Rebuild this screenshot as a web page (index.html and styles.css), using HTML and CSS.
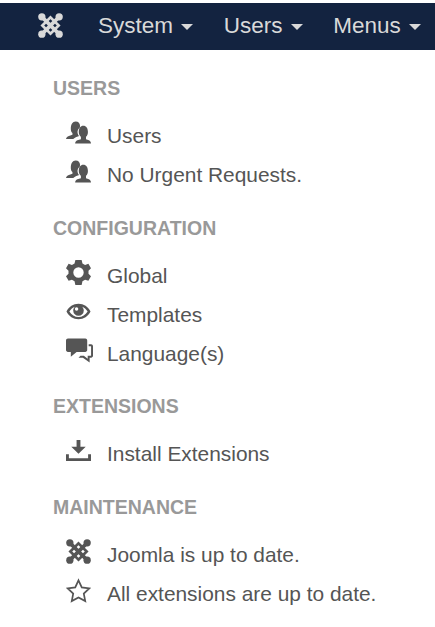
FILE: index.html
```html
<!DOCTYPE html>
<html lang="en">

<head>
    <meta charset="UTF-8">
    <meta name="viewport" content="width=device-width, initial-scale=1.0">
    <title>Control Panel</title>
    <link rel="stylesheet" href="styles.css">
</head>

<body>
    <svg class="defs" width="0" height="0">
        <symbol id="i-joomla" viewBox="0 0 26 26">
            <path class="j-arm" d="M4 4 L22 22 M22 4 L4 22" />
            <path class="j-ring" d="M13 4.500 L21.500 13 L13 21.500 L4.500 13 Z" />
            <circle cx="4" cy="4" r="3.800" /><circle cx="22" cy="4" r="3.800" />
            <circle cx="4" cy="22" r="3.800" /><circle cx="22" cy="22" r="3.800" />
        </symbol>
        <symbol id="i-users" viewBox="0 0 26 23">
            <path d="M10 0c3 0 4.600 2 4.600 4.500 0 .8-.1 1.500-.4 2.200-1.600 1-2.400 2.900-2.200 4.800.1 1.500.8 2.900 1.700 3.700-1.500.5-4.500 1.500-6.200 3H0c.3-1.400 1.200-2.400 3-3l3.700-1.400v-1.700C5.400 11 5 9.500 5 7.500 5 3 6.800 0 10 0z" />
            <path d="M18 4.500c3 0 4.800 2.600 4.800 6.500 0 2.300-.7 4-2 5v2.500l3 1c1.300.5 2 1.500 2.200 3.500H9.500c.2-2 1-3 2.300-3.500l3.700-1v-2.500c-1.300-1-2.200-2.700-2.200-5 0-3.900 1.700-6.500 4.700-6.500z" />
        </symbol>
        <symbol id="i-cog" viewBox="0 0 24 24">
            <path fill-rule="evenodd" d="M9 0h6l.8 3.300 2.500 1.400 3.200-1L24 8l-2.400 2.300v3l2.400 2.400-2.500 4.300-3.200-1-2.500 1.500L15 24H9l-.8-3.500-2.500-1.500-3.200 1L0 15.700l2.400-2.400v-3L0 8l2.500-4.300 3.200 1 2.500-1.400L9 0zm3 7a5 5 0 1 0 0 10 5 5 0 0 0 0-10z" />
        </symbol>
        <symbol id="i-eye" viewBox="0 0 26 18">
            <path fill-rule="evenodd" d="M13 1C7.500 1 3 4 .5 9 3 14 7.500 17 13 17s10-3 12.500-8C23 4 18.500 1 13 1zM3.500 9C5 6.600 7 4.900 9.300 4 8.200 5 7.500 6.400 7.500 8a5.500 5.500 0 0 0 11 0c0-1.600-.7-3-1.800-4C19 4.900 21 6.600 22.500 9 20.300 12.700 16.900 14.800 13 14.800S5.700 12.700 3.500 9z" />
            <circle cx="11" cy="6.500" r="1.800" class="eye-glint" />
        </symbol>
        <symbol id="i-chat" viewBox="0 0 28 25">
            <path d="M2 0h18c1.100 0 2 .9 2 2v10c0 1.100-.9 2-2 2H11l-6 5v-5H2c-1.100 0-2-.9-2-2V2C0 .9.900 0 2 0z" />
            <path d="M23.500 6H26c1.100 0 2 .9 2 2v10c0 1.100-.9 2-2 2h-1.500v5l-7-5H13l2-2h3.500l4 3V18H26V8h-2.500V6z" />
        </symbol>
        <symbol id="i-install" viewBox="0 0 26 22">
            <path d="M11 0h4v7h5.500L13 14.500 5.500 7H11V0z" />
            <path d="M0 15h3v4h20v-4h3v7H0v-7z" />
        </symbol>
        <symbol id="i-star" viewBox="0 0 26 24">
            <path class="star" d="M13 1.500l3.400 7.300 7.800 1-5.700 5.400 1.500 7.800L13 19.200l-7 3.800 1.500-7.800-5.700-5.400 7.800-1L13 1.500z" />
        </symbol>
    </svg>

    <!-- top menu -->
    <nav class="navbar">
        <svg class="brand"><use href="#i-joomla" /></svg>
        <a href="#" class="nav-item">System <span class="caret"></span></a>
        <a href="#" class="nav-item">Users <span class="caret"></span></a>
        <a href="#" class="nav-item">Menus <span class="caret"></span></a>
    </nav>

    <div class="sidebar">
        <h2 class="nav-header">USERS</h2>
        <ul class="nav-list">
            <li><svg class="icon"><use href="#i-users" /></svg>Users</li>
            <li><svg class="icon"><use href="#i-users" /></svg>No Urgent Requests.</li>
        </ul>

        <h2 class="nav-header">CONFIGURATION</h2>
        <ul class="nav-list">
            <li><svg class="icon"><use href="#i-cog" /></svg>Global</li>
            <li><svg class="icon"><use href="#i-eye" /></svg>Templates</li>
            <li><svg class="icon icon-wide"><use href="#i-chat" /></svg>Language(s)</li>
        </ul>

        <h2 class="nav-header">EXTENSIONS</h2>
        <ul class="nav-list">
            <li><svg class="icon"><use href="#i-install" /></svg>Install Extensions</li>
        </ul>

        <h2 class="nav-header">MAINTENANCE</h2>
        <ul class="nav-list">
            <li><svg class="icon"><use href="#i-joomla" /></svg>Joomla is up to date.</li>
            <li><svg class="icon"><use href="#i-star" /></svg>All extensions are up to date.</li>
        </ul>
    </div>
</body>

</html>
```

FILE: styles.css
```css
body {
    font-family: "Liberation Sans", Arial, sans-serif;
    margin: 0;
    padding: 0;
    background-color: #fff;
    color: #555;
    overflow: hidden;
}

.defs {
    position: absolute;
}

/* Top menu */
.navbar {
    display: flex;
    align-items: center;
    height: 45px;
    margin-top: 3px;
    padding: 0 0 2px 38px;
    background-color: #132340;
    white-space: nowrap;
}

.brand {
    width: 25px;
    height: 25px;
    margin-right: 35px;
    color: #d9d9d9;
    fill: currentColor;
    flex: none;
}

.nav-item {
    display: block;
    margin-right: 30.500px;
    font-size: 22.500px;
    color: #d9d9d9;
    text-decoration: none;
}

.caret {
    display: inline-block;
    width: 0;
    height: 0;
    margin-left: 2px;
    vertical-align: middle;
    border-top: 6px solid #d9d9d9;
    border-left: 6px solid transparent;
    border-right: 6px solid transparent;
}

/* Joomla logo parts */
.j-arm {
    fill: none;
    stroke: currentColor;
    stroke-width: 3.800;
}

.j-ring {
    fill: none;
    stroke: currentColor;
    stroke-width: 2.800;
}

.eye-glint {
    fill: #fff;
}

.star {
    fill: none;
    stroke: currentColor;
    stroke-width: 1.800;
}

/* Side lists */
.sidebar {
    padding: 25px 0 0 53px;
}

.nav-header {
    margin: 0;
    font-size: 19.500px;
    line-height: 26px;
    font-weight: bold;
    color: #999;
}

.nav-list {
    list-style: none;
    margin: 15.500px 0 20.200px;
    padding: 0 0 0 13px;
}

.nav-list li {
    display: flex;
    align-items: center;
    height: 39px;
    font-size: 20.900px;
}

.icon {
    flex: none;
    width: 25px;
    height: 25px;
    margin-right: 16px;
    margin-top: -7px;
    color: #555;
    fill: currentColor;
}

.icon-wide {
    width: 27px;
    height: 27px;
    margin-right: 14px;
}
```
